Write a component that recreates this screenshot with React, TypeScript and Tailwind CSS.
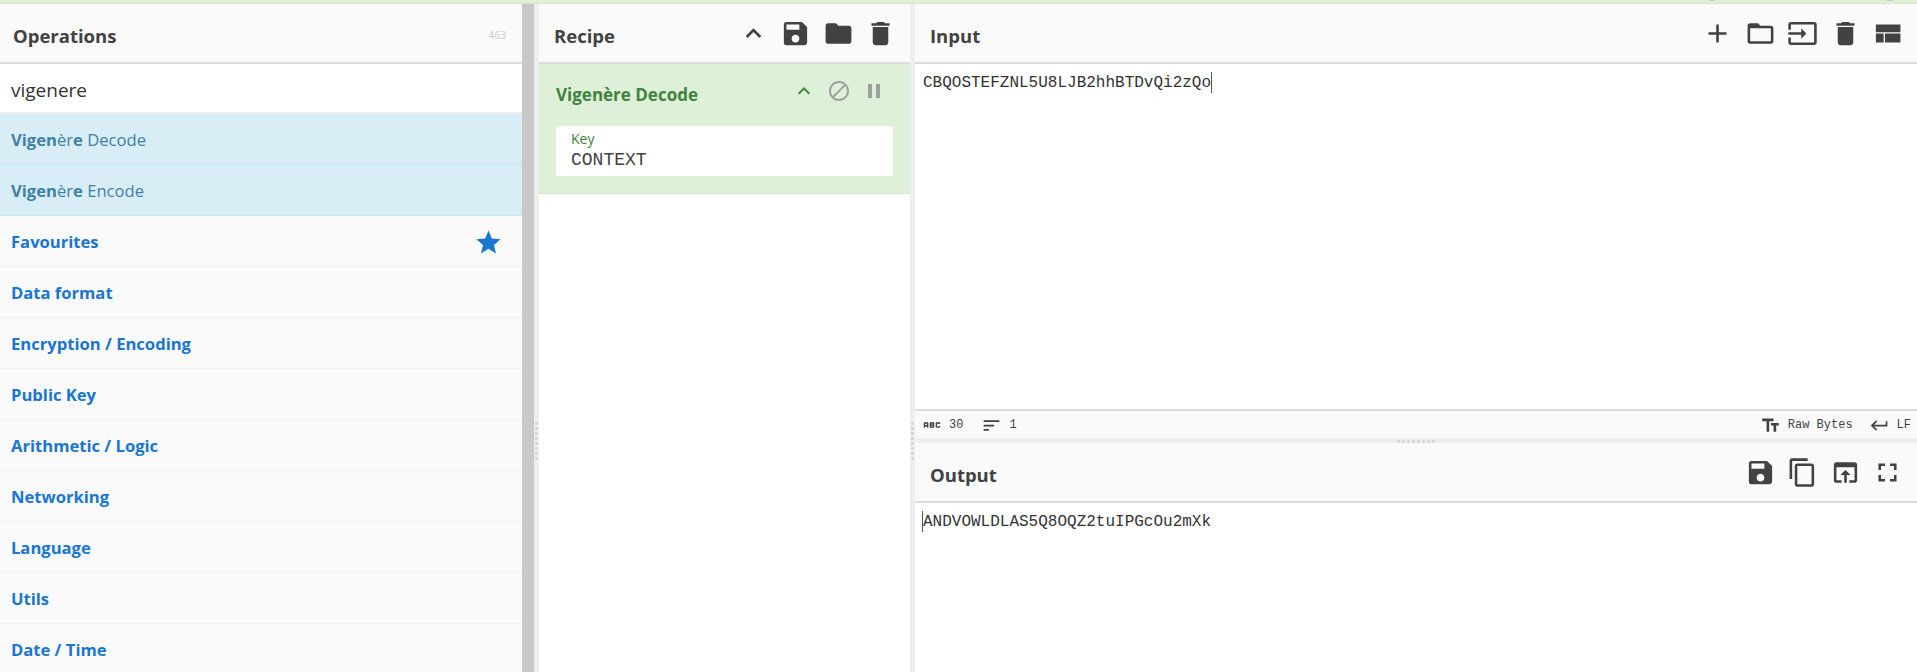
import React from "react";
import {
  MdAbc, MdAdd, MdBlock, MdContentCopy, MdDelete, MdFolder, MdFolderOpen, MdFullscreen, MdInput,
  MdKeyboardArrowUp, MdKeyboardReturn, MdOpenInBrowser, MdPause, MdSave, MdSort, MdStar, MdTextFields,
} from "react-icons/md";

const sans = "font-['Open_Sans','Noto_Sans',sans-serif]";
const mono = "font-['Liberation_Mono',monospace]";
const cats = ["Favourites", "Data format", "Encryption / Encoding", "Public Key", "Arithmetic / Logic", "Networking", "Language", "Utils", "Date / Time"];

function Header({ title, children }: { title: string; children?: React.ReactNode }) {
  return (
    <div className="h-[60px] shrink-0 flex items-center justify-between bg-[#fafafa] border-b-2 border-[#dddddd] pl-[15px] pr-[14px] text-[#424242]">
      <span className="text-[18.5px] font-bold pt-[5px]">{title}</span>
      <div className="flex items-center gap-[11.5px] pt-[1px]">{children}</div>
    </div>
  );
}

function Hit({ rest }: { rest: string }) {
  return (
    <div className="h-[51px] shrink-0 flex items-center pl-[11px] pt-[2px] bg-[#d9edf7] border-b border-[#bce8f1] text-[#3d82a6] text-[16.6px]">
      <b className="font-bold">Vigen</b>è<b className="font-normal">r</b>
      <b className="font-bold">e</b>&nbsp;{rest}
    </div>
  );
}

function VGutter() {
  return (
    <div className="w-[5px] shrink-0 bg-[#eeeeee] pt-[418px] flex justify-center">
      <div className="w-[3px] h-[38px] bg-[repeating-linear-gradient(#d8d8d8_0_3px,#eeeeee_3px_5px)]" />
    </div>
  );
}

function ViewCompact() {
  return (
    <svg width={31} height={31} viewBox="0 0 24 24" fill="currentColor">
      <path d="M3 19h6v-7H3v7zm7 0h12v-7H10v7zM3 5v6h19V5H3z" />
    </svg>
  );
}

export default function App() {
  return (
    <div className={`h-screen w-full overflow-hidden flex flex-col bg-white ${sans}`}>
      <div className="relative h-[4px] shrink-0 bg-[#dff0d8] border-b border-[#d6e9c6]">
        <span className="absolute left-[1709px] top-0 w-[6px] h-[1px] bg-[#a9cde6]" />
        <span className="absolute left-[1887px] top-0 w-[6px] h-[1px] bg-[#a9cde6]" />
      </div>
      <div className="flex-1 flex min-h-0">
        <div className="w-[522px] shrink-0 bg-[#fafafa] flex flex-col">
          <div className="h-[60px] shrink-0 flex justify-between border-b-2 border-[#dddddd] pl-[13px] pr-[16px] text-[#424242]">
            <span className="text-[18.5px] font-bold self-center pt-[5px]">Operations</span>
            <span className="text-[10px] text-[#cccccc] mt-[24px]">463</span>
          </div>
          <div className="h-[50px] shrink-0 bg-white border-b-2 border-[#eeeeee] pl-[11px] pt-[5px] flex items-center text-[19px] text-[#333333]">vigenere</div>
          <Hit rest="Decode" />
          <Hit rest="Encode" />
          {cats.map((c) => (
            <div key={c} className="h-[51px] shrink-0 flex items-center justify-between pl-[11px] pr-[19px] pt-[3px] border-b border-[#eeeeee] text-[#1976d2] text-[16.6px] font-bold">
              {c}
              {c === "Favourites" && <MdStar className="text-[#1976d2]" size={29} />}
            </div>
          ))}
        </div>
        <div className="w-[12px] shrink-0 bg-[#c8c8c8]" />
        <VGutter />
        <div className="w-[371px] shrink-0 flex flex-col">
          <Header title="Recipe">
            <MdKeyboardArrowUp size={31} />
            <MdSave size={31} />
            <MdFolder size={31} />
            <MdDelete size={31} />
          </Header>
          <div className="h-[130px] shrink-0 bg-[#dff0d8] border-b border-[#d6e9c6] pt-[16px] px-[17px]">
            <div className="h-[30px] flex items-center justify-between text-[#41823f]">
              <span className="text-[17px] font-bold">Vigenère Decode</span>
              <div className="flex items-center gap-[11px] mr-[7px] mb-[8px]">
                <MdKeyboardArrowUp size={24} />
                <MdBlock size={24} className="text-[#9e9e9e]" />
                <MdPause size={24} className="text-[#9e9e9e]" />
              </div>
            </div>
            <div className="mt-[16px] h-[50px] bg-white rounded-t-[4px] pl-[15px] pt-[5px]">
              <div className="text-[14px] leading-[16px] text-[#41823f]">Key</div>
              <div className={`text-[18px] leading-[22px] mt-[2px] text-[#424242] ${mono}`}>CONTEXT</div>
            </div>
          </div>
        </div>
        <VGutter />
        <div className="flex-1 min-w-0 flex flex-col">
          <Header title="Input">
            <MdAdd size={31} />
            <MdFolderOpen size={31} />
            <MdInput size={31} />
            <MdDelete size={31} />
            <ViewCompact />
          </Header>
          <div className={`flex-1 pl-[8px] pt-[8px] text-[16px] leading-[22px] text-[#333333] ${mono}`}>
            CBQOSTEFZNL5U8LJB2hhBTDvQi2zQo<span className="inline-block w-px h-[21px] align-top bg-[#555555]" />
          </div>
          <div className={`h-[29px] shrink-0 bg-[#fafafa] border-t-2 border-[#dddddd] flex items-center justify-between pl-[6px] pr-[6px] pt-[1px] text-[12px] text-[#424242] ${mono}`}>
            <div className="flex items-center">
              <MdAbc size={22} />
              <span className="ml-[6px]">30</span>
              <MdSort size={21} className="ml-[18px]" />
              <span className="ml-[7px]">1</span>
            </div>
            <div className="flex items-center">
              <MdTextFields size={21} />
              <span className="ml-[7px]">Raw Bytes</span>
              <MdKeyboardReturn size={21} className="ml-[16px]" />
              <span className="ml-[7px]">LF</span>
            </div>
          </div>
          <div className="h-[5px] shrink-0 bg-[#eeeeee] flex justify-center pt-[2px]">
            <div className="w-[38px] h-[3px] bg-[repeating-linear-gradient(90deg,#d8d8d8_0_3px,#eeeeee_3px_5px)]" />
          </div>
          <Header title="Output">
            <MdSave size={31} />
            <MdContentCopy size={31} />
            <MdOpenInBrowser size={31} />
            <MdFullscreen size={31} />
          </Header>
          <div className={`h-[169px] shrink-0 pl-[7px] pt-[8px] text-[16px] leading-[22px] text-[#333333] ${mono}`}>
            <span className="inline-block w-px h-[21px] align-top bg-[#555555]" />ANDVOWLDLAS5Q8OQZ2tuIPGcOu2mXk
          </div>
        </div>
      </div>
    </div>
  );
}
